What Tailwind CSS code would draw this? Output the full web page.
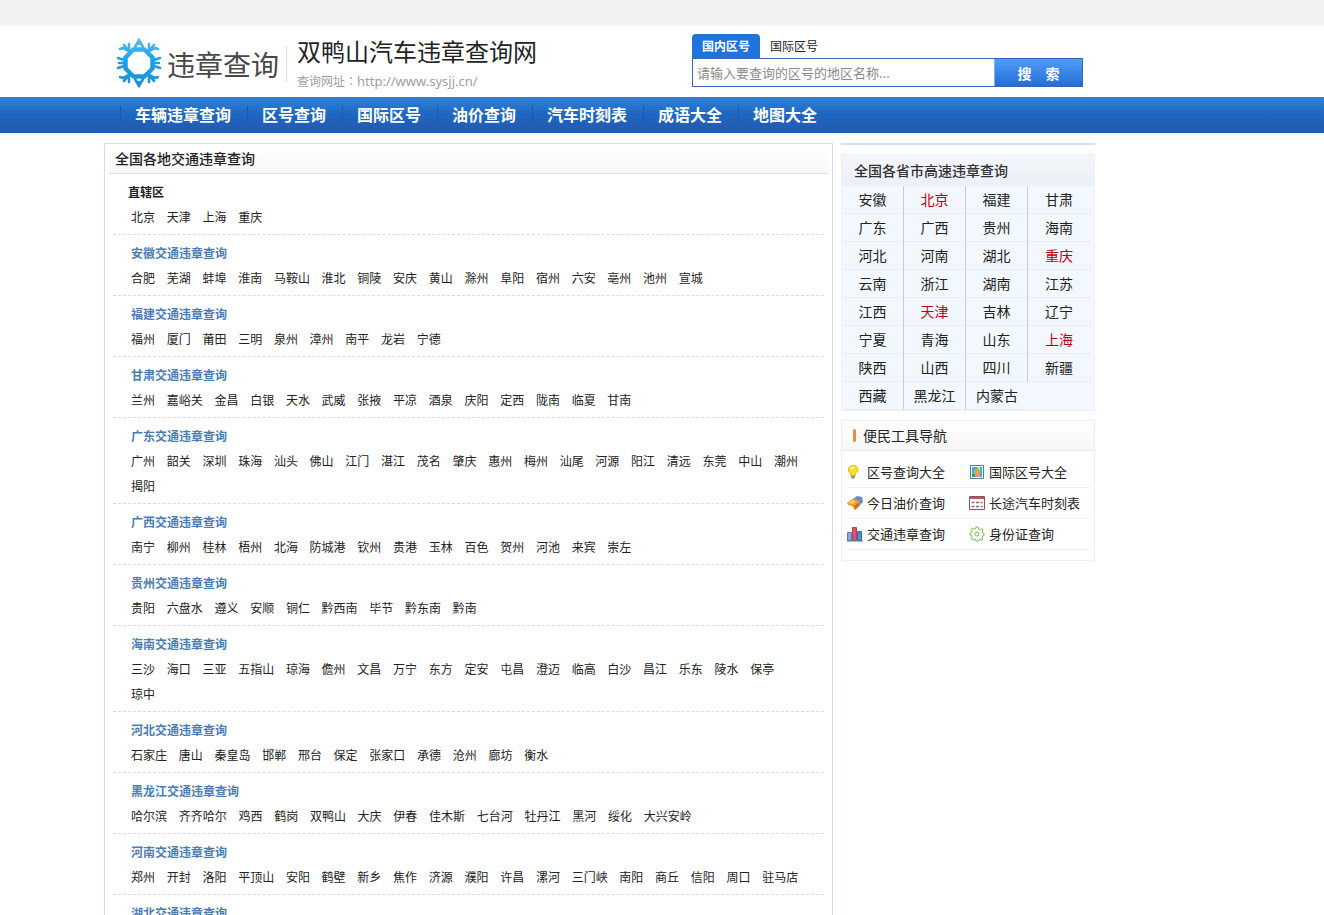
<!DOCTYPE html>
<html lang="zh-CN">
<head>
<meta charset="utf-8">
<title>双鸭山汽车违章查询网</title>
<script src="https://cdn.jsdelivr.net/npm/@tailwindcss/browser@4"></script>
</head>
<body class="bg-white font-['Noto_Sans_CJK_SC',sans-serif] text-xs text-[#222]">
<div class="h-[26px] border-b border-[#f8f8f8] bg-[#f2f2f2]"></div>

<header class="flex h-[71px] pl-[104px]">
  <a href="#" class="flex w-[182px] items-start pt-3 pl-3" aria-label="违章查询">
    <svg class="h-[50px] w-[46px] shrink-0" viewBox="0 0 46 50" aria-hidden="true">
      <defs><linearGradient id="lg" gradientUnits="userSpaceOnUse" x1="0" y1="-25" x2="0" y2="25"><stop offset="0" stop-color="#62bdf0"/><stop offset=".4" stop-color="#1ba3ee"/><stop offset="1" stop-color="#1a8fd2"/></linearGradient></defs>
      <g transform="translate(23 25)" fill="none" stroke="url(#lg)">
        <path d="M-5.500-13.500H5.500L13.500-5.500V5.500L5.500 13.500H-5.500L-13.500 5.500V-5.500Z" stroke-width="4.500" stroke-linejoin="round"/>
        <g stroke-width="2.600" stroke-linecap="round">
          <path d="M-4-16L0-23L4-16M0-23V-19M-4 16L0 23L4 16M0 23V19"/>
          <path d="M10-12L16-15M10-12L10-19M16-15L19-14M10-12L15-18"/>
          <path d="M-10-12L-16-15M-10-12L-10-19M-16-15L-19-14M-10-12L-15-18"/>
          <path d="M10 12L16 15M10 12L10 19M16 15L19 14M10 12L15 18"/>
          <path d="M-10 12L-16 15M-10 12L-10 19M-16 15L-19 14M-10 12L-15 18"/>
          <path d="M15-3L21-5M16 0H20M15 3L21 5M-15-3L-21-5M-16 0H-20M-15 3L-21 5"/>
        </g>
      </g>
    </svg>
    <span class="mt-[10px] ml-[5px] text-[28px] leading-8 whitespace-nowrap text-[#484848]">违章查询</span>
  </a>
  <div class="mt-5 h-9 w-px bg-[#dcdcdc]"></div>
  <div class="w-[405px] pt-[9px] pl-[10px]">
    <h1 class="text-2xl leading-8 text-[#222]">双鸭山汽车违章查询网</h1>
    <p class="mt-1 font-['Noto_Sans','Noto_Sans_CJK_TC',sans-serif] text-xs leading-5 text-[#a0a0a0]">查询网址<span lang="zh-TW">：</span><span class="text-[13px]">http://www.sysjj.cn/</span></p>
  </div>
  <form class="w-[391px] pt-2">
    <div class="flex h-6 items-center text-xs">
      <button type="button" class="h-6 w-[68px] rounded-t bg-[#2173dc] font-bold text-white">国内区号</button>
      <button type="button" class="ml-[10px]">国际区号</button>
    </div>
    <div class="flex h-[29px] border border-[#3d62ba]">
      <input type="text" aria-label="区号的地区名称" placeholder="请输入要查询的区号的地区名称..." class="min-w-0 flex-1 px-1 text-[13px] placeholder:text-[#8a8a8a] outline-none">
      <button type="submit" class="flex w-[88px] items-center justify-center gap-[14px] border-l border-[#7db2f2] bg-linear-to-b from-[#4f9df8] to-[#276cd6] text-sm font-bold text-white"><span>搜</span><span>索</span></button>
    </div>
  </form>
</header>

<nav class="flex h-9 items-center bg-linear-to-b from-[#3583d5] via-[#1d68c2] via-45% to-[#2458b0] pb-[2px] pl-[120px] text-base font-bold text-white">
  <a href="#" class="border-l border-[#155aac] pr-4 pl-[14px] leading-4">车辆违章查询</a>
  <a href="#" class="border-l border-[#155aac] pr-4 pl-[14px] leading-4">区号查询</a>
  <a href="#" class="border-l border-[#155aac] pr-4 pl-[14px] leading-4">国际区号</a>
  <a href="#" class="border-l border-[#155aac] pr-4 pl-[14px] leading-4">油价查询</a>
  <a href="#" class="border-l border-[#155aac] pr-4 pl-[14px] leading-4">汽车时刻表</a>
  <a href="#" class="border-l border-[#155aac] pr-4 pl-[14px] leading-4">成语大全</a>
  <a href="#" class="border-l border-[#155aac] pr-4 pl-[14px] leading-4">地图大全</a>
</nav>

<main class="flex items-start gap-2 pt-[10px] pl-[104px]">
  <section class="w-[729px] border border-[#d5dbea] px-2">
    <h2 class="-mx-1 border-b border-[#dedee3] bg-linear-to-b from-white to-[#f8f8fb] pl-[6px] text-sm leading-[29px] font-medium">全国各地交通违章查询</h2>
    <div id="regions"></div>
  </section>

  <aside class="w-[254px]">
    <div class="h-[2px] bg-[#d8dde9]"></div>
    <section class="mt-[9px] border border-[#edf0f5] bg-[#f2f8fd]">
      <h2 class="bg-linear-to-b from-[#f6f6f9] to-[#eaf0f8] pb-px pl-3 text-sm leading-[30px] font-medium text-[#333]">全国各省市高速违章查询</h2>
      <ul id="provinces" class="grid grid-cols-[62px_62px_62px_62px] text-center text-sm leading-[27px]"></ul>
    </section>
    <section class="mt-[9px] border border-[#eee] pb-[10px]">
      <h2 class="flex items-center border-b border-[#e8e8e8] bg-linear-to-b from-white to-[#f6f6f6] pl-[11px] text-sm leading-[29px] before:mr-[7px] before:h-[13px] before:w-[3px] before:rounded-sm before:bg-[#ee8a3c]">便民工具导航</h2>
      <ul class="grid grid-cols-[122px_1fr] pt-[6px] pr-1 pl-[5px] text-[13px] leading-[30px]">
        <li class="border-b border-[#eee]"><a href="#" class="flex items-center gap-1"><svg class="size-4" viewBox="0 0 16 16"><path d="M3.500 9.500C0 7 1 1.500 6 1.500s6.500 5 2.500 8l-.5 2.500H4Z" fill="#ffdf24" stroke="#e6b400"/><path d="M4 5q1-2 3-1.500" stroke="#fffbd0" stroke-width="2" fill="none"/><path d="M4 11.500h4V14l-2 1-2-1Z" fill="#a39f6c"/></svg>区号查询大全</a></li>
        <li class="border-b border-[#eee]"><a href="#" class="flex items-center gap-1"><svg class="size-4" viewBox="0 0 16 16"><path d="M1.500 1.500h13v13h-13Z" fill="#eaf8ff" stroke="#4187ab"/><path d="M3 3h10v10H3Z" fill="#38b9cf"/><path d="M5 13V7l3-3 3 3v6Z" fill="#ec9a5d"/><path d="M8 3h3v4Z" fill="#f8e05b"/><path d="M3 10h3v3H3Z" fill="#3b9b60"/></svg>国际区号大全</a></li>
        <li class="border-b border-[#eee]"><a href="#" class="flex items-center gap-1"><svg class="size-4" viewBox="0 0 16 16"><path d="M6 4l4-3 5 1 1 5-4 4-5-3Z" fill="#668bd0"/><path d="M0 8l5-4 6 1 2 5-5 5-3-4-4-1Z" fill="#f29b25"/><path d="M1 8l4-3 4 1-3 3Z" fill="#ffc866"/><path d="M8 15l5-5-2-2-4 3Z" fill="#c77422"/></svg>今日油价查询</a></li>
        <li class="border-b border-[#eee]"><a href="#" class="flex items-center gap-1"><svg class="size-4" viewBox="0 0 16 16"><path d="M.5 1.500h15v13H.5Z" fill="#fff" stroke="#8a5365"/><path d="M1 2h14v2H1Z" fill="#c34e5e"/><path d="M2.500 7.500h3M7 7.500h3M11.500 7.500h2M2.500 11.500h3M7 11.500h3M11.500 11.500h2" stroke="#926374" stroke-width="1.500"/></svg>长途汽车时刻表</a></li>
        <li class="border-b border-[#eee]"><a href="#" class="flex items-center gap-1"><svg class="size-4" viewBox="0 0 16 16"><path d="M.5 6.500h4v8h-4Z" fill="#91a3df" stroke="#6379bf"/><path d="M5.500 1.500h4v13h-4Z" fill="#df5260" stroke="#a9495f"/><path d="M10.500 5.500h4v9h-4Z" fill="#4e8ee0" stroke="#3367aa"/><path d="M0 15h16" stroke="#4778ae"/></svg>交通违章查询</a></li>
        <li class="border-b border-[#eee]"><a href="#" class="flex items-center gap-1"><svg class="size-4" viewBox="0 0 16 16" fill="none" stroke="#75bb4c"><path d="M7 1h2l.5 2 1.500.5L12.500 2.500l1.500 1.500-1 1.500.5 1.500 1.500.5v2l-1.500.5-.5 1.500 1 1.500-1.500 1.500-1.500-1-1.500.5L9 15H7l-.5-1.500L5 13l-1.500 1L2 12.500l1-1.500-.5-1.500L1 9V7l1.500-.5L3 5 2 3.500 3.500 2 5 3l1.500-.5Z"/><circle cx="8" cy="8" r="2"/></svg>身份证查询</a></li>
      </ul>
    </section>
  </aside>
</main>

<script>
const regions = [
  ["", "北京 天津 上海 重庆"],
  ["安徽", "合肥 芜湖 蚌埠 淮南 马鞍山 淮北 铜陵 安庆 黄山 滁州 阜阳 宿州 六安 亳州 池州 宣城"],
  ["福建", "福州 厦门 莆田 三明 泉州 漳州 南平 龙岩 宁德"],
  ["甘肃", "兰州 嘉峪关 金昌 白银 天水 武威 张掖 平凉 酒泉 庆阳 定西 陇南 临夏 甘南"],
  ["广东", "广州 韶关 深圳 珠海 汕头 佛山 江门 湛江 茂名 肇庆 惠州 梅州 汕尾 河源 阳江 清远 东莞 中山 潮州 揭阳"],
  ["广西", "南宁 柳州 桂林 梧州 北海 防城港 钦州 贵港 玉林 百色 贺州 河池 来宾 崇左"],
  ["贵州", "贵阳 六盘水 遵义 安顺 铜仁 黔西南 毕节 黔东南 黔南"],
  ["海南", "三沙 海口 三亚 五指山 琼海 儋州 文昌 万宁 东方 定安 屯昌 澄迈 临高 白沙 昌江 乐东 陵水 保亭 琼中"],
  ["河北", "石家庄 唐山 秦皇岛 邯郸 邢台 保定 张家口 承德 沧州 廊坊 衡水"],
  ["黑龙江", "哈尔滨 齐齐哈尔 鸡西 鹤岗 双鸭山 大庆 伊春 佳木斯 七台河 牡丹江 黑河 绥化 大兴安岭"],
  ["河南", "郑州 开封 洛阳 平顶山 安阳 鹤壁 新乡 焦作 济源 濮阳 许昌 漯河 三门峡 南阳 商丘 信阳 周口 驻马店"],
  ["湖北", "武汉 黄石 十堰 宜昌 襄阳 鄂州 荆门 孝感 荆州 黄冈"]
];
document.getElementById("regions").innerHTML = regions.map(([name, cities]) => `
  <section class="border-b border-dashed border-[#dcdcdc] py-[5px] leading-[25px]">
    ${name ? `<h3 class="pl-[18px] font-bold text-[#4a7db5]"><a href="#">${name}交通违章查询</a></h3>` : `<h3 class="pl-[15px] font-bold">直辖区</h3>`}
    <p class="mr-[10px] ml-[18px]">${cities.split(" ").map(c => `<a href="#" class="mr-[9px] inline-block">${c}</a>`).join(" ")}</p>
  </section>`).join("");

const provinces = "安徽 北京 福建 甘肃 广东 广西 贵州 海南 河北 河南 湖北 重庆 云南 浙江 湖南 江苏 江西 天津 吉林 辽宁 宁夏 青海 山东 上海 陕西 山西 四川 新疆 西藏 黑龙江 内蒙古".split(" ");
const red = ["北京", "重庆", "天津", "上海"];
document.getElementById("provinces").innerHTML = provinces.map((p, i) => {
  const line = i % 4 < 3 && i < 30 ? "border-r border-r-[#c3ccd8]" : "";
  return `<li class="border-b border-b-[#e8eef5] ${line}"><a href="#" class="${red.includes(p) ? "text-[#b80012]" : ""}">${p}</a></li>`;
}).join("");
</script>
</body>
</html>
